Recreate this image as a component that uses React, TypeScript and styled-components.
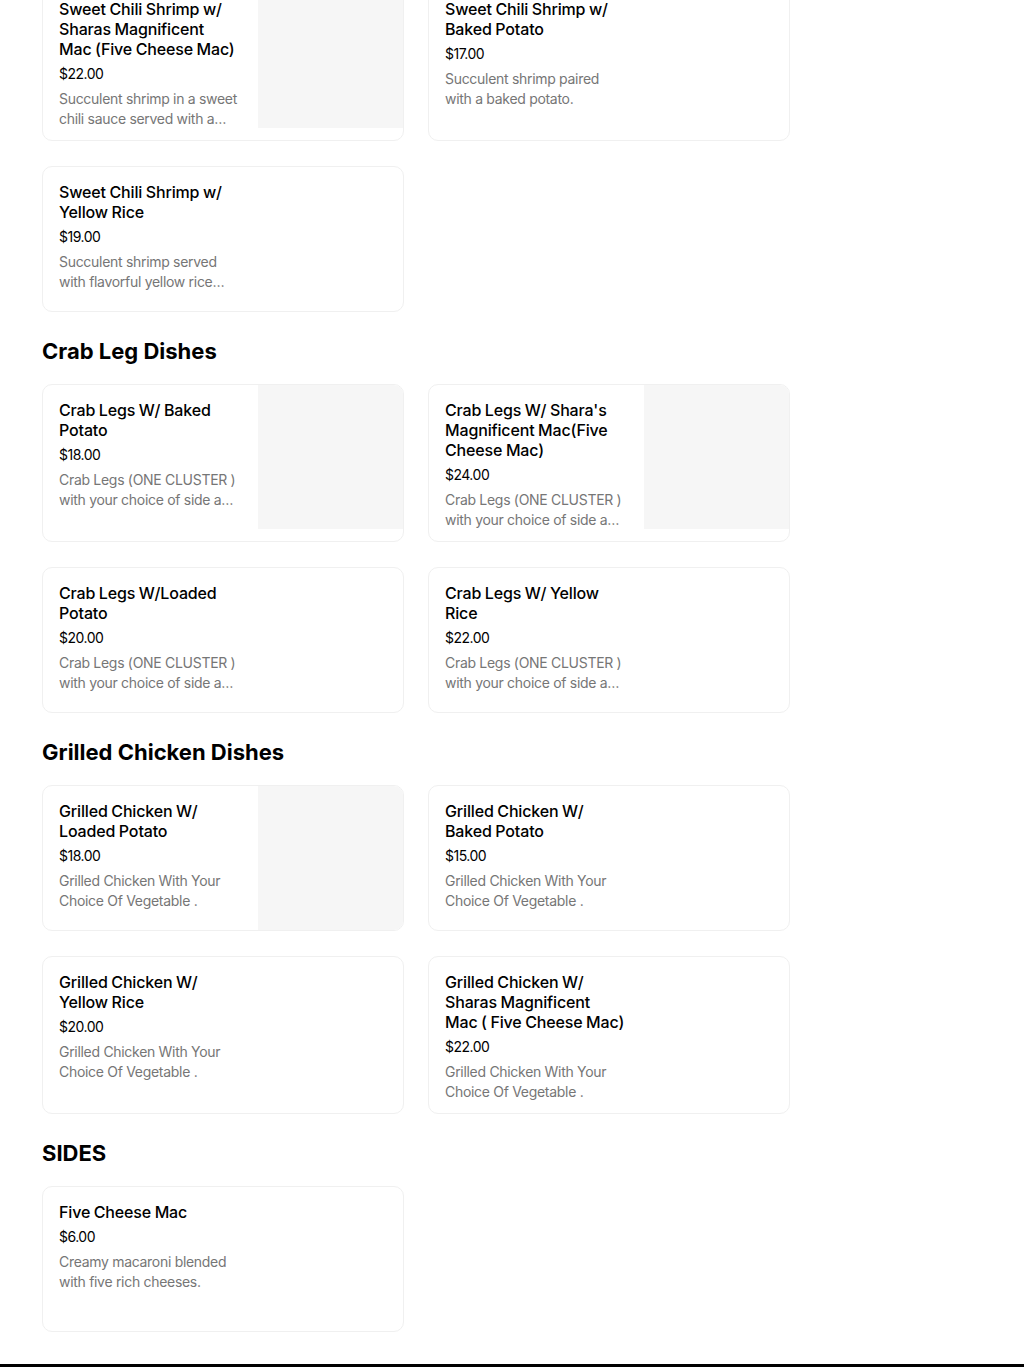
import React from "react";
import styled, { createGlobalStyle } from "styled-components";

type Dish = {
  name: string;
  price: string;
  description: string;
  hasImage?: boolean;
};

type Section = {
  title?: string;
  dishes: Dish[];
};

const CRAB_DESC = "Crab Legs (ONE CLUSTER ) with your choice of side and vegetable.";
const CHICKEN_DESC = "Grilled Chicken With Your Choice Of Vegetable .";

const SECTIONS: Section[] = [
  {
    dishes: [
      {
        name: "Sweet Chili Shrimp w/ Sharas Magnificent Mac (Five Cheese Mac)",
        price: "$22.00",
        description:
          "Succulent shrimp in a sweet chili sauce served with a creamy five cheese mac.",
        hasImage: true,
      },
      {
        name: "Sweet Chili Shrimp w/ Baked Potato",
        price: "$17.00",
        description: "Succulent shrimp paired with a baked potato.",
      },
      {
        name: "Sweet Chili Shrimp w/ Yellow Rice",
        price: "$19.00",
        description:
          "Succulent shrimp served with flavorful yellow rice and a side of vegetables.",
      },
    ],
  },
  {
    title: "Crab Leg Dishes",
    dishes: [
      { name: "Crab Legs W/ Baked Potato", price: "$18.00", description: CRAB_DESC, hasImage: true },
      {
        name: "Crab Legs W/ Shara's Magnificent Mac(Five Cheese Mac)",
        price: "$24.00",
        description: CRAB_DESC,
        hasImage: true,
      },
      { name: "Crab Legs W/Loaded Potato", price: "$20.00", description: CRAB_DESC },
      { name: "Crab Legs W/ Yellow Rice", price: "$22.00", description: CRAB_DESC },
    ],
  },
  {
    title: "Grilled Chicken Dishes",
    dishes: [
      {
        name: "Grilled Chicken W/ Loaded Potato",
        price: "$18.00",
        description: CHICKEN_DESC,
        hasImage: true,
      },
      { name: "Grilled Chicken W/ Baked Potato", price: "$15.00", description: CHICKEN_DESC },
      { name: "Grilled Chicken W/ Yellow Rice", price: "$20.00", description: CHICKEN_DESC },
      {
        name: "Grilled Chicken W/ Sharas Magnificent Mac ( Five Cheese Mac)",
        price: "$22.00",
        description: CHICKEN_DESC,
      },
    ],
  },
  {
    title: "SIDES",
    dishes: [
      {
        name: "Five Cheese Mac",
        price: "$6.00",
        description: "Creamy macaroni blended with five rich cheeses.",
      },
    ],
  },
];

const App = () => {
  return (
    <>
      <GlobalStyle />
      <Page>
        <Menu>
          {SECTIONS.map((section, i) => (
            <MenuSection key={section.title ?? i}>
              {section.title && <SectionTitle>{section.title}</SectionTitle>}
              <DishGrid>
                {section.dishes.map((dish) => (
                  <DishCard key={dish.name}>
                    <DishInfo>
                      <DishName>{dish.name}</DishName>
                      <DishPrice>{dish.price}</DishPrice>
                      <DishDescription>{dish.description}</DishDescription>
                    </DishInfo>
                    {dish.hasImage && <DishImage />}
                  </DishCard>
                ))}
              </DishGrid>
            </MenuSection>
          ))}
        </Menu>
        <Footer />
      </Page>
    </>
  );
};

export default App;

const GlobalStyle = createGlobalStyle`
  * {
    box-sizing: border-box;
  }

  body {
    margin: 0;
    background: #ffffff;
    font-family: Inter, "Noto Sans", sans-serif;
    color: #000000;
    overflow: hidden;
  }
`;

// the menu is scrolled a little, so the first row starts above the top edge
const Page = styled.div`
  display: flex;
  flex-direction: column;
  margin-top: -17px;
`;

const Menu = styled.main`
  display: flex;
  flex-direction: column;
  gap: 23px;
  padding: 0 0 32px 42px;
`;

const MenuSection = styled.section`
  display: flex;
  flex-direction: column;
`;

const SectionTitle = styled.h2`
  margin: 0 0 17px;
  font-size: 22px;
  line-height: 32px;
  font-weight: 700;
`;

const DishGrid = styled.div`
  display: grid;
  grid-template-columns: repeat(2, 362px);
  gap: 25px 24px;
`;

const DishCard = styled.article`
  display: flex;
  justify-content: space-between;
  min-height: 146px;
  border: 1px solid #f0f0f0;
  border-radius: 10px;
  overflow: hidden;
  background: #ffffff;
`;

const DishInfo = styled.div`
  display: flex;
  flex-direction: column;
  flex: 0 0 215px;
  padding: 15px 19px 11px 16px;
`;

const DishName = styled.div`
  font-size: 16px;
  line-height: 20px;
  font-weight: 500;
  letter-spacing: -0.15px;
  word-spacing: -0.5px;
`;

const DishPrice = styled.div`
  margin-top: 5px;
  font-size: 14px;
  line-height: 20px;
  letter-spacing: -0.5px;
`;

const DishDescription = styled.div`
  margin-top: 5px;
  font-size: 14px;
  line-height: 20px;
  letter-spacing: -0.3px;
  color: #767676;
  display: -webkit-box;
  -webkit-line-clamp: 2;
  -webkit-box-orient: vertical;
  overflow: hidden;
`;

const DishImage = styled.div`
  flex: 0 0 145px;
  height: 144px;
  background: #f6f6f6;
`;

const Footer = styled.footer`
  height: 240px;
  background: #000000;
`;
